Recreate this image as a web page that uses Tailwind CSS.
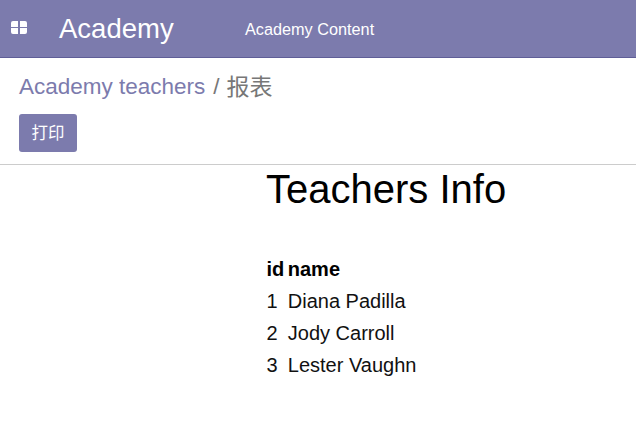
<!DOCTYPE html>
<html>
<head>
<meta charset="utf-8">
<script src="https://cdn.jsdelivr.net/npm/@tailwindcss/browser@4"></script>
</head>
<body class="bg-white font-['Liberation_Sans','Noto_Sans_CJK_SC',sans-serif] overflow-hidden h-[439px]">
<header class="h-[58px] bg-[#7c7bad] border-b border-[#5f5e97] flex items-center text-white">
  <div class="w-[59px] pl-[11px] mb-[2px] shrink-0">
    <svg width="16" height="13" viewBox="0 0 16 13" class="fill-white block"><path d="M0 2a2 2 0 0 1 2-2h5v6H0zM9 0h5a2 2 0 0 1 2 2v4H9zM0 7h7v6H2a2 2 0 0 1-2-2zM9 7h7v4a2 2 0 0 1-2 2H9z"/></svg>
  </div>
  <span class="w-[186px] shrink-0 text-[27.5px] leading-[32px]">Academy</span>
  <span class="text-[16.25px] leading-6">Academy Content</span>
</header>
<section class="h-[107px] border-b border-[#cccccc] pl-[19px] pt-[14px]">
  <div class="text-[22.5px] leading-[30px] text-[#777777] flex"><span class="text-[#7c7bad]">Academy teachers</span><span class="ml-[8px]">/</span><span class="ml-[7px] text-[23px]">报表</span></div>
  <button class="mt-[12px] block w-[58px] h-[38px] rounded-[3px] bg-[#7c7bad] text-white text-[16.5px]">打印</button>
</section>
<main class="w-[370px] ml-[266px]">
  <h2 class="text-[40px] leading-[48px] text-black">Teachers Info</h2>
  <table class="mt-[40px] text-xl leading-[32px] text-[#111111] border-collapse">
    <tbody>
      <tr class="font-bold text-black"><td class="pl-[0.5px] pr-[2.5px]">id</td><td class="px-px">name</td></tr>
      <tr><td class="pl-[0.5px] pr-[2.5px]">1</td><td class="px-px">Diana Padilla</td></tr>
      <tr><td class="pl-[0.5px] pr-[2.5px]">2</td><td class="px-px">Jody Carroll</td></tr>
      <tr><td class="pl-[0.5px] pr-[2.5px]">3</td><td class="px-px">Lester Vaughn</td></tr>
    </tbody>
  </table>
</main>
</body>
</html>
